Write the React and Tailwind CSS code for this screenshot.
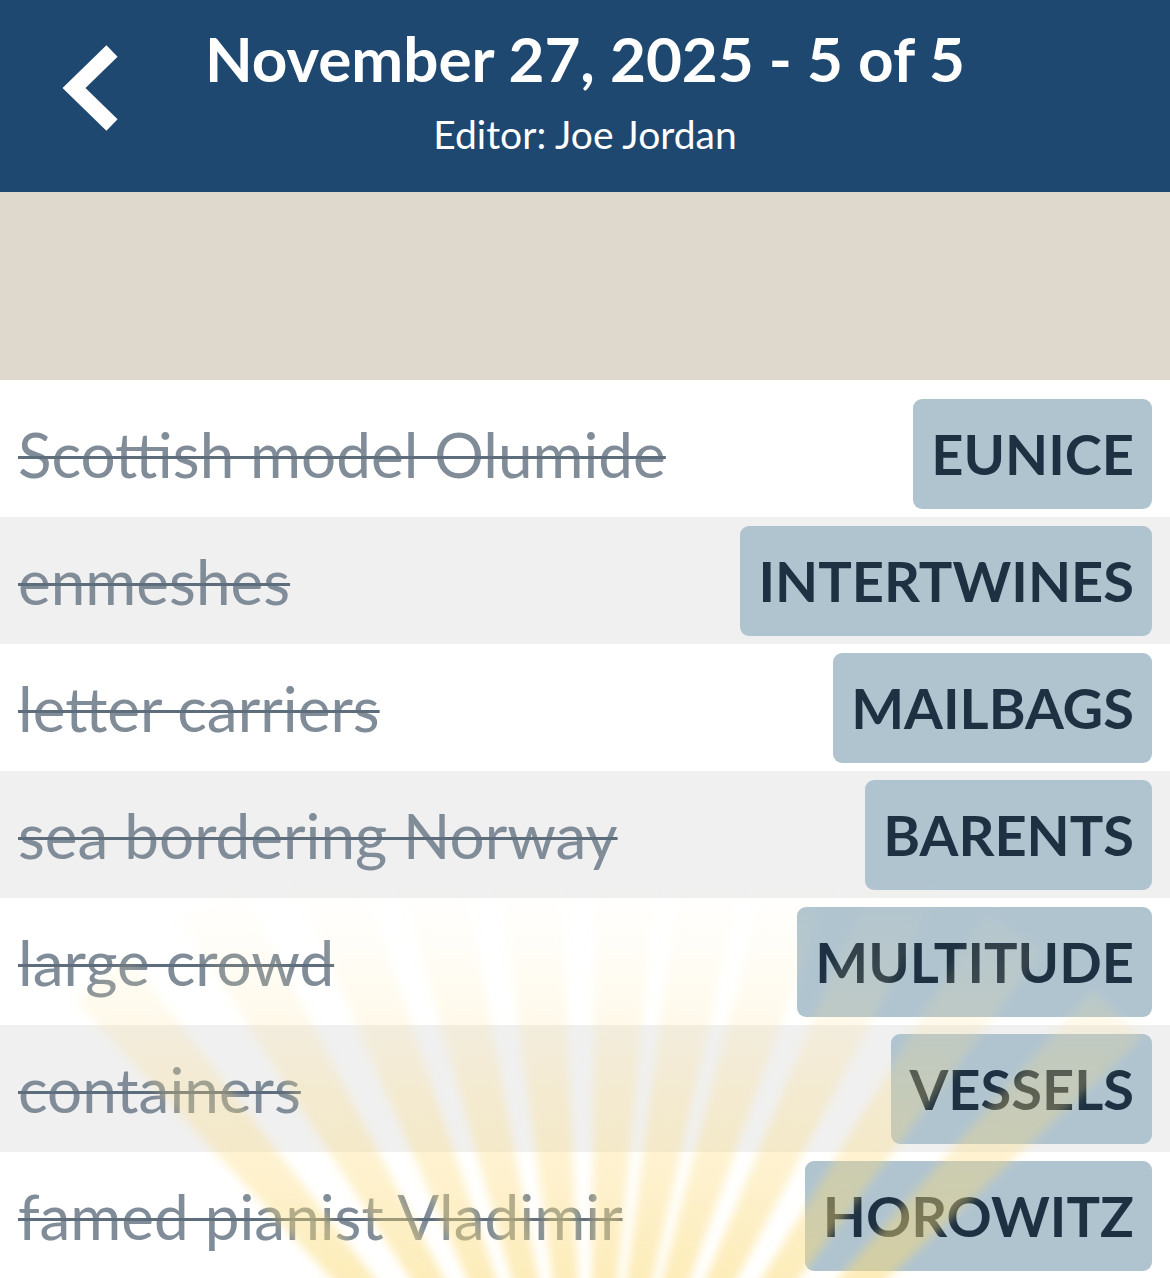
import React from "react";

const rows = [
  ["Scottish model Olumide", "EUNICE"],
  ["enmeshes", "INTERTWINES"],
  ["letter carriers", "MAILBAGS"],
  ["sea bordering Norway", "BARENTS"],
  ["large crowd", "MULTITUDE"],
  ["containers", "VESSELS"],
  ["famed pianist Vladimir", "HOROWITZ"],
];

function Rays() {
  const cx = 590;
  const cy = 1560;
  const angles = [-40, -30, -21, -13, -5, 3, 10, 17, 25, 34, 44];
  return (
    <svg
      className="pointer-events-none absolute left-0 top-0"
      width="1170"
      height="1278"
      viewBox="0 0 1170 1278"
    >
      <defs>
        <linearGradient id="rg" x1="0" y1="1290" x2="0" y2="880" gradientUnits="userSpaceOnUse">
          <stop offset="0" stopColor="#fbd970" stopOpacity="0.5" />
          <stop offset="0.5" stopColor="#fbdc80" stopOpacity="0.27" />
          <stop offset="1" stopColor="#fde9b0" stopOpacity="0" />
        </linearGradient>
        <filter id="bl" x="-20%" y="-20%" width="140%" height="140%">
          <feGaussianBlur stdDeviation="5" />
        </filter>
      </defs>
      <g filter="url(#bl)">
        {angles.map((a, i) => {
          const w = 2.6;
          const r = 760;
          const a1 = ((a - w) * Math.PI) / 180;
          const a2 = ((a + w) * Math.PI) / 180;
          const p1 = [cx + r * Math.sin(a1), cy - r * Math.cos(a1)];
          const p2 = [cx + r * Math.sin(a2), cy - r * Math.cos(a2)];
          return (
            <polygon
              key={i}
              points={`${cx},${cy} ${p1[0]},${p1[1]} ${p2[0]},${p2[1]}`}
              fill="url(#rg)"
            />
          );
        })}
      </g>
    </svg>
  );
}

export default function App() {
  return (
    <div
      className="relative w-[1170px] h-[1278px] overflow-hidden bg-white"
      style={{ fontFamily: "Lato, 'Open Sans', sans-serif" }}
    >
      <header className="flex h-[192px] items-start bg-[#1f4870]">
        <div className="flex w-[150px] justify-center pl-[34px] pt-[43px]">
          <svg width="64" height="90" viewBox="0 0 64 90">
            <path d="M52 8 L14 45 L52 82" fill="none" stroke="white" strokeWidth="16" strokeLinejoin="miter" />
          </svg>
        </div>
        <div className="flex flex-1 flex-col items-center pr-[150px] pt-[23px]">
          <div className="text-[62px] font-bold leading-[70px] text-white">November 27, 2025 - 5 of 5</div>
          <div className="mt-[18px] text-[39px] leading-[46px] text-white">Editor: Joe Jordan</div>
        </div>
      </header>
      <div className="h-[188px] bg-[#dfd8cc]" />
      <div className="flex flex-col pt-[10px]">
        {rows.map(([clue, ans], i) => (
          <div
            key={i}
            className={`flex h-[127px] items-center justify-between pl-[18px] pr-[18px] ${
              i % 2 === 1 ? "bg-[#f0f0f0]" : "bg-white"
            }`}
          >
            <span className="text-[62px] font-normal leading-[80px] text-[#808c98] line-through decoration-[#5e6d7b] decoration-[3px]">
              {clue}
            </span>
            <span className="flex h-[110px] items-center rounded-[9px] bg-[#b0c4d0] px-[18px] text-[56px] font-bold text-[#1e3142]">
              {ans}
            </span>
          </div>
        ))}
      </div>
      <Rays />
    </div>
  );
}
